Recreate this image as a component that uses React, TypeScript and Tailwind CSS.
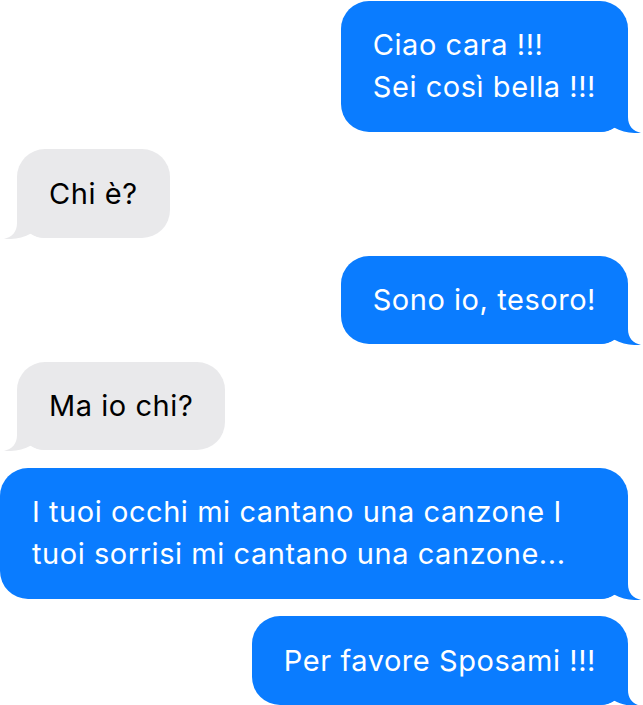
import React from "react";

type Msg = { id: number; from: "me" | "them"; text: string[] };

const MESSAGES: Msg[] = [
  { id: 1, from: "me", text: ["Ciao cara !!!", "Sei così bella !!!"] },
  { id: 2, from: "them", text: ["Chi è?"] },
  { id: 3, from: "me", text: ["Sono io, tesoro!"] },
  { id: 4, from: "them", text: ["Ma io chi?"] },
  { id: 5, from: "me", text: ["I tuoi occhi mi cantano una canzone I tuoi sorrisi mi cantano una canzone..."] },
  { id: 6, from: "me", text: ["Per favore Sposami !!!"] },
];

// bubble tail, drawn for the right side; flipped for the left one
function Tail({ color, flip }: { color: string; flip?: boolean }) {
  return (
    <svg
      width="43"
      height="34"
      viewBox="0 0 43 34"
      className={`absolute bottom-[-1px] ${flip ? "left-[-15px] -scale-x-100" : "right-[-15px]"}`}
    >
      <path
        d="M0 33 L0 0 L28 0 L28 18 C28 27 33 32 41 34 C32 34.5 22 33 14 28.5 C10 31.5 6 33 0 33 Z"
        fill={color}
      />
    </svg>
  );
}

function Bubble({ msg }: { msg: Msg }) {
  const mine = msg.from === "me";
  return (
    <div className={`flex ${mine ? "justify-end pr-[15px]" : "justify-start pl-[17px]"}`}>
      <div
        className={`relative rounded-[28px] px-[32px] py-[23.25px] text-[29px] leading-[42px] tracking-[0.55px] ${
          mine ? "bg-[#0a7cff] text-white" : "bg-[#e9e9eb] text-black"
        }`}
      >
        <Tail color={mine ? "#0a7cff" : "#e9e9eb"} flip={!mine} />
        <div className="relative">
          {msg.text.map((line, i) => (
            <div key={i}>{line}</div>
          ))}
        </div>
      </div>
    </div>
  );
}

export default function App() {
  return (
    <div
      className="w-[643px] h-[705px] overflow-hidden bg-white pt-[1px] flex flex-col gap-[17.8px]"
      style={{ fontFamily: "Inter, 'Noto Sans', sans-serif" }}
    >
      {MESSAGES.map((m) => (
        <Bubble key={m.id} msg={m} />
      ))}
    </div>
  );
}
